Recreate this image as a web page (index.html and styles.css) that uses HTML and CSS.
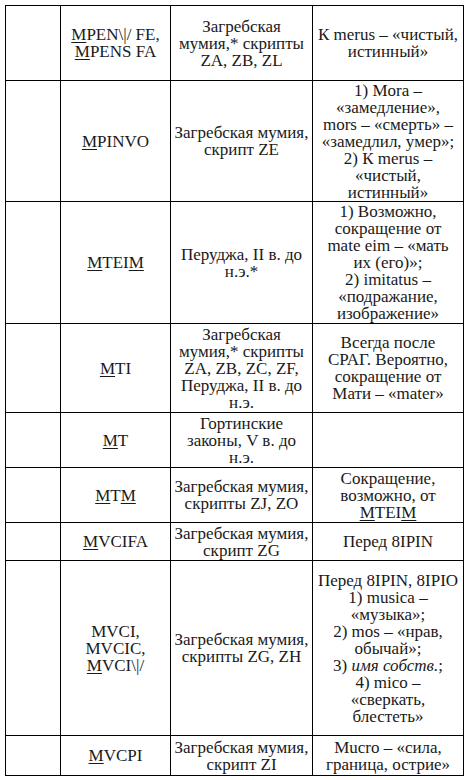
FILE: index.html
```html
<!DOCTYPE html>
<html lang="ru">
<head>
<meta charset="utf-8">
<link rel="stylesheet" href="styles.css">
</head>
<body>
<table class="tbl">
<colgroup><col class="c1"><col class="c2"><col class="c3"><col class="c4"></colgroup>
<tr class="r1"><td></td><td><u>M</u>PEN\|/ FE,<br><u>M</u>PENS FA</td><td>Загребская<br>мумия,* скрипты<br>ZA, ZB, ZL</td><td>К merus – «чистый,<br>истинный»</td></tr>
<tr class="r2"><td></td><td><u>M</u>PINVO</td><td>Загребская мумия,<br>скрипт ZE</td><td>1) Mora –<br>«замедление»,<br>mors – «смерть» –<br>«замедлил, умер»;<br>2) К merus –<br>«чистый,<br>истинный»</td></tr>
<tr class="r3"><td></td><td><u>M</u>TEI<u>M</u></td><td>Перуджа, II в. до<br>н.э.*</td><td>1) Возможно,<br>сокращение от<br>mate eim – «мать<br>их (его)»;<br>2) imitatus –<br>«подражание,<br>изображение»</td></tr>
<tr class="r4"><td></td><td><u>M</u>TI</td><td>Загребская<br>мумия,* скрипты<br>ZA, ZB, ZC, ZF,<br>Перуджа, II в. до<br>н.э.</td><td>Всегда после<br>СРАГ. Вероятно,<br>сокращение от<br>Мати – «mater»</td></tr>
<tr class="r5"><td></td><td><u>M</u>T</td><td>Гортинские<br>законы, V в. до<br>н.э.</td><td></td></tr>
<tr class="r6"><td></td><td><u>M</u>T<u>M</u></td><td>Загребская мумия,<br>скрипты ZJ, ZO</td><td>Сокращение,<br>возможно, от<br><u>M</u>TEI<u>M</u></td></tr>
<tr class="r7"><td></td><td><u>M</u>VCIFA</td><td>Загребская мумия,<br>скрипт ZG</td><td>Перед 8IPIN</td></tr>
<tr class="r8"><td></td><td>MVCI,<br>MVCIC,<br><u>M</u>VCI\|/</td><td>Загребская мумия,<br>скрипты ZG, ZH</td><td>Перед 8IPIN, 8IPIO<br>1) musica –<br>«музыка»;<br>2) mos – «нрав,<br>обычай»;<br>3) <i>имя собств.</i>;<br>4) mico –<br>«сверкать,<br>блестеть»</td></tr>
<tr class="r9"><td></td><td><u>M</u>VCPI</td><td>Загребская мумия,<br>скрипт ZI</td><td>Mucro – «сила,<br>граница, острие»</td></tr>
</table>
</body>
</html>
```
FILE: styles.css
```css
html, body {
  margin: 0;
  padding: 0;
  background: #fff;
}
body {
  padding: 5px 0 0 5px;
}
.tbl {
  border-collapse: collapse;
  table-layout: fixed;
  width: 458px;
  font-family: "Liberation Serif", "Times New Roman", serif;
  font-size: 17px;
  line-height: 17px;
  color: #1a1a1a;
}
.c1 { width: 55px; }
.c2 { width: 110px; }
.c3 { width: 142px; }
.c4 { width: 151px; }
.tbl td {
  border: 1px solid #000;
  padding: 0;
  text-align: center;
  vertical-align: middle;
  white-space: nowrap;
}
.tbl u {
  text-decoration-thickness: 1px;
  text-underline-offset: 2px;
}
.r1 { height: 75px; }
.r2 { height: 121px; }
.r3 { height: 122px; }
.r4 { height: 89px; }
.r5 { height: 55px; }
.r6 { height: 55px; }
.r7 { height: 38px; }
.r8 { height: 175px; }
.r9 { height: 40px; }
```
